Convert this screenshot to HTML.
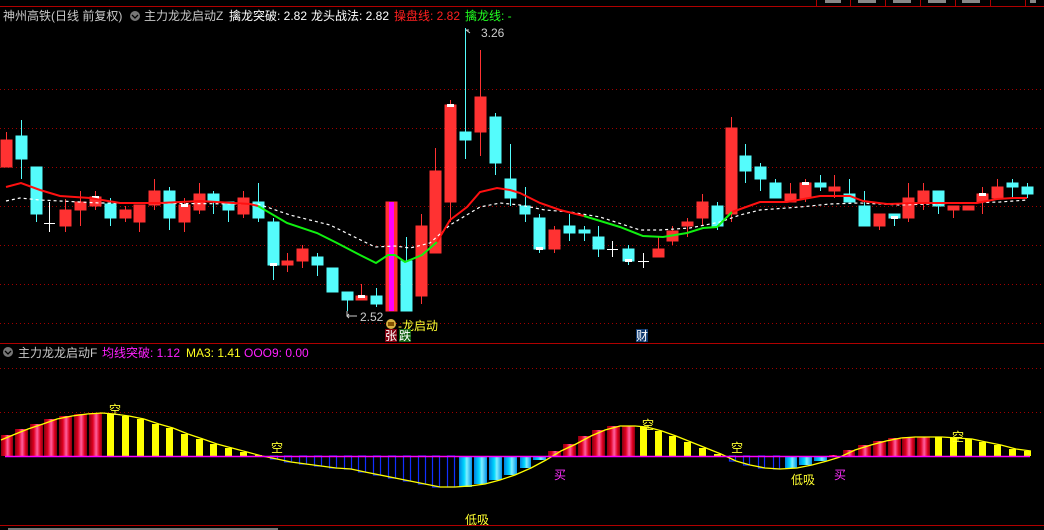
<!DOCTYPE html>
<html><head><meta charset="utf-8"><style>
html,body{margin:0;padding:0;background:#000;width:1044px;height:530px;overflow:hidden}
svg{display:block}
text{font-family:"Liberation Sans","Noto Sans CJK SC",sans-serif;font-size:12px}
</style></head><body>
<svg width="1044" height="530" viewBox="0 0 1044 530" xmlns="http://www.w3.org/2000/svg">
<defs>
<linearGradient id="rg" x1="0" x2="1" y1="0" y2="0">
<stop offset="0" stop-color="#8a0010"/><stop offset="0.3" stop-color="#e00020"/><stop offset="0.55" stop-color="#ff60a0"/><stop offset="0.8" stop-color="#e00020"/><stop offset="1" stop-color="#8a0010"/></linearGradient>
<linearGradient id="cg" x1="0" x2="1" y1="0" y2="0">
<stop offset="0" stop-color="#0080e0"/><stop offset="0.4" stop-color="#00d8ff"/><stop offset="0.6" stop-color="#80f0ff"/><stop offset="1" stop-color="#0090e8"/></linearGradient>
</defs>
<rect width="1044" height="530" fill="#000"/>
<!-- top toolbar -->
<line x1="0" y1="6.5" x2="1044" y2="6.5" stroke="#b00000"/>
<g stroke="#b00000"><line x1="816.5" y1="0" x2="816.5" y2="6"/><line x1="850.5" y1="0" x2="850.5" y2="6"/><line x1="885.5" y1="0" x2="885.5" y2="6"/><line x1="920.5" y1="0" x2="920.5" y2="6"/><line x1="955.5" y1="0" x2="955.5" y2="6"/><line x1="990.5" y1="0" x2="990.5" y2="6"/><line x1="1025.5" y1="0" x2="1025.5" y2="6"/></g>
<g fill="#888"><rect x="825" y="0" width="16" height="3"/><rect x="858" y="0" width="18" height="3"/><rect x="893" y="0" width="18" height="3"/><rect x="928" y="0" width="18" height="3"/><rect x="962" y="0" width="18" height="3"/><rect x="1030" y="0" width="6" height="3"/></g>
<!-- header -->
<text x="3" y="20" fill="#c8c8c8">神州高铁(日线 前复权)</text>
<circle cx="135" cy="16" r="5" fill="#777"/><path d="M132 15l3 3 3-3" stroke="#000" stroke-width="1.3" fill="none"/>
<text x="144" y="20" fill="#c8c8c8">主力龙龙启动Z</text>
<text x="229" y="20" fill="#fff">擒龙突破: 2.82</text>
<text x="311" y="20" fill="#fff">龙头战法: 2.82</text>
<text x="394" y="20" fill="#ff2020">操盘线: 2.82</text>
<text x="465" y="20" fill="#20ff20">擒龙线: -</text>
<!-- grid -->
<g stroke="#a00000" stroke-dasharray="1 3">
<line x1="0" y1="89.5" x2="1044" y2="89.5"/><line x1="0" y1="128.5" x2="1044" y2="128.5"/><line x1="0" y1="167.5" x2="1044" y2="167.5"/><line x1="0" y1="206.5" x2="1044" y2="206.5"/><line x1="0" y1="245.5" x2="1044" y2="245.5"/><line x1="0" y1="284.5" x2="1044" y2="284.5"/><line x1="0" y1="323.5" x2="1044" y2="323.5"/>
<line x1="0" y1="368.5" x2="1044" y2="368.5"/><line x1="0" y1="412.5" x2="1044" y2="412.5"/>
</g>
<!-- candles -->
<g stroke-width="1">
<g stroke="#ff3232" fill="#ff3232">
<line x1="6.5" y1="132" x2="6.5" y2="167"/><rect x="1" y="140" width="11" height="27"/>
<line x1="65.5" y1="199" x2="65.5" y2="232"/><rect x="60" y="210" width="11" height="16"/>
<line x1="80.5" y1="191" x2="80.5" y2="226"/><rect x="75" y="202" width="11" height="8"/>
<line x1="95.5" y1="191" x2="95.5" y2="210"/><rect x="90" y="197" width="11" height="9"/>
<line x1="125.5" y1="206" x2="125.5" y2="222"/><rect x="120" y="210" width="11" height="8"/>
<line x1="139.5" y1="205" x2="139.5" y2="232"/><rect x="134" y="205" width="11" height="17"/>
<line x1="154.5" y1="179" x2="154.5" y2="210"/><rect x="149" y="191" width="11" height="14"/>
<line x1="184.5" y1="198" x2="184.5" y2="232"/><rect x="179" y="205" width="11" height="17"/>
<line x1="199.5" y1="183" x2="199.5" y2="214"/><rect x="194" y="194" width="11" height="16"/>
<line x1="243.5" y1="191" x2="243.5" y2="218"/><rect x="238" y="198" width="11" height="16"/>
<line x1="287.5" y1="253" x2="287.5" y2="272"/><rect x="282" y="261" width="11" height="4"/>
<line x1="302.5" y1="245" x2="302.5" y2="268"/><rect x="297" y="249" width="11" height="12"/>
<line x1="361.5" y1="284" x2="361.5" y2="300"/><rect x="356" y="296" width="11" height="4"/>
<rect x="386" y="202" width="11" height="109"/>
<line x1="421.5" y1="214" x2="421.5" y2="304"/><rect x="416" y="226" width="11" height="70"/>
<line x1="435.5" y1="148" x2="435.5" y2="253"/><rect x="430" y="171" width="11" height="82"/>
<line x1="450.5" y1="100" x2="450.5" y2="222"/><rect x="445" y="105" width="11" height="97"/>
<line x1="480.5" y1="50" x2="480.5" y2="156"/><rect x="475" y="97" width="11" height="35"/>
<line x1="554.5" y1="226" x2="554.5" y2="253"/><rect x="549" y="230" width="11" height="19"/>
<line x1="658.5" y1="237" x2="658.5" y2="257"/><rect x="653" y="249" width="11" height="8"/>
<line x1="672.5" y1="226" x2="672.5" y2="245"/><rect x="667" y="231" width="11" height="10"/>
<line x1="687.5" y1="218" x2="687.5" y2="237"/><rect x="682" y="222" width="11" height="4"/>
<line x1="702.5" y1="194" x2="702.5" y2="226"/><rect x="697" y="202" width="11" height="16"/>
<line x1="731.5" y1="117" x2="731.5" y2="222"/><rect x="726" y="128" width="11" height="86"/>
<line x1="790.5" y1="183" x2="790.5" y2="202"/><rect x="785" y="194" width="11" height="8"/>
<line x1="805.5" y1="179" x2="805.5" y2="202"/><rect x="800" y="183" width="11" height="15"/>
<line x1="834.5" y1="175" x2="834.5" y2="198"/><rect x="829" y="187" width="11" height="4"/>
<line x1="879.5" y1="214" x2="879.5" y2="230"/><rect x="874" y="214" width="11" height="12"/>
<line x1="908.5" y1="183" x2="908.5" y2="222"/><rect x="903" y="198" width="11" height="20"/>
<line x1="923.5" y1="183" x2="923.5" y2="210"/><rect x="918" y="191" width="11" height="11"/>
<line x1="953.5" y1="206" x2="953.5" y2="218"/><rect x="948" y="206" width="11" height="4"/>
<rect x="963" y="206" width="11" height="4"/>
<line x1="982.5" y1="187" x2="982.5" y2="214"/><rect x="977" y="194" width="11" height="8"/>
<line x1="997.5" y1="179" x2="997.5" y2="198"/><rect x="992" y="187" width="11" height="11"/>
</g>
<rect x="389" y="202" width="5" height="109" fill="#ff00ff"/>
<g stroke="#54fcfc" fill="#54fcfc">
<line x1="21.5" y1="120" x2="21.5" y2="179"/><rect x="16" y="136" width="11" height="23"/>
<line x1="36.5" y1="167" x2="36.5" y2="222"/><rect x="31" y="167" width="11" height="47"/>
<line x1="110.5" y1="198" x2="110.5" y2="226"/><rect x="105" y="204" width="11" height="14"/>
<line x1="169.5" y1="187" x2="169.5" y2="230"/><rect x="164" y="191" width="11" height="27"/>
<line x1="213.5" y1="191" x2="213.5" y2="214"/><rect x="208" y="194" width="11" height="8"/>
<line x1="228.5" y1="202" x2="228.5" y2="222"/><rect x="223" y="202" width="11" height="8"/>
<line x1="258.5" y1="183" x2="258.5" y2="222"/><rect x="253" y="202" width="11" height="16"/>
<line x1="273.5" y1="218" x2="273.5" y2="280"/><rect x="268" y="222" width="11" height="43"/>
<line x1="317.5" y1="253" x2="317.5" y2="276"/><rect x="312" y="257" width="11" height="8"/>
<rect x="327" y="268" width="11" height="24"/>
<line x1="347.5" y1="292" x2="347.5" y2="311"/><rect x="342" y="292" width="11" height="8"/>
<line x1="376.5" y1="288" x2="376.5" y2="307"/><rect x="371" y="296" width="11" height="8"/>
<line x1="406.5" y1="237" x2="406.5" y2="311"/><rect x="401" y="261" width="11" height="50"/>
<line x1="465.5" y1="28" x2="465.5" y2="159"/><rect x="460" y="132" width="11" height="8"/>
<line x1="495.5" y1="113" x2="495.5" y2="175"/><rect x="490" y="117" width="11" height="46"/>
<line x1="510.5" y1="144" x2="510.5" y2="206"/><rect x="505" y="179" width="11" height="19"/>
<line x1="525.5" y1="187" x2="525.5" y2="222"/><rect x="520" y="206" width="10" height="8"/>
<line x1="539.5" y1="214" x2="539.5" y2="253"/><rect x="534" y="218" width="11" height="31"/>
<line x1="569.5" y1="214" x2="569.5" y2="241"/><rect x="564" y="226" width="11" height="7"/>
<line x1="584.5" y1="226" x2="584.5" y2="241"/><rect x="579" y="230" width="11" height="3"/>
<line x1="598.5" y1="226" x2="598.5" y2="257"/><rect x="593" y="237" width="11" height="12"/>
<line x1="628.5" y1="245" x2="628.5" y2="265"/><rect x="623" y="249" width="11" height="12"/>
<line x1="717.5" y1="202" x2="717.5" y2="230"/><rect x="712" y="206" width="11" height="20"/>
<line x1="745.5" y1="144" x2="745.5" y2="183"/><rect x="740" y="156" width="11" height="15"/>
<line x1="760.5" y1="163" x2="760.5" y2="191"/><rect x="755" y="167" width="11" height="12"/>
<line x1="775.5" y1="179" x2="775.5" y2="198"/><rect x="770" y="183" width="11" height="15"/>
<line x1="820.5" y1="175" x2="820.5" y2="191"/><rect x="815" y="183" width="11" height="4"/>
<line x1="849.5" y1="179" x2="849.5" y2="202"/><rect x="844" y="194" width="11" height="8"/>
<line x1="864.5" y1="191" x2="864.5" y2="226"/><rect x="859" y="206" width="11" height="20"/>
<line x1="894.5" y1="214" x2="894.5" y2="226"/><rect x="889" y="214" width="11" height="4"/>
<line x1="938.5" y1="191" x2="938.5" y2="214"/><rect x="933" y="191" width="11" height="15"/>
<line x1="1012.5" y1="179" x2="1012.5" y2="198"/><rect x="1007" y="183" width="11" height="4"/>
<line x1="1027.5" y1="183" x2="1027.5" y2="198"/><rect x="1022" y="187" width="11" height="7"/>
</g>
<g stroke="#fff">
<line x1="44" y1="223.5" x2="55" y2="223.5"/><line x1="49.5" y1="202" x2="49.5" y2="232"/>
<line x1="607" y1="249.5" x2="618" y2="249.5"/><line x1="612.5" y1="241" x2="612.5" y2="257"/>
<line x1="638" y1="261.5" x2="649" y2="261.5"/><line x1="643.5" y1="253" x2="643.5" y2="268"/>
</g>
<g fill="#fff">
<rect x="92" y="196" width="7" height="3"/><rect x="181" y="204" width="7" height="3"/><rect x="270" y="263" width="7" height="3"/><rect x="358" y="295" width="7" height="3"/><rect x="447" y="104" width="7" height="3"/><rect x="536" y="247" width="7" height="3"/><rect x="625" y="259" width="7" height="3"/><rect x="802" y="182" width="7" height="3"/><rect x="891" y="216" width="7" height="3"/><rect x="979" y="193" width="7" height="3"/>
</g>
</g>
<!-- MA lines -->
<polyline fill="none" stroke="#fff" stroke-width="1.2" stroke-dasharray="3 3" points="6,201 20,198 40,200 100,203 258,204 290,215 330,225 375,247 395,246 410,248 430,243 450,225 480,207 500,203 520,205 545,210 570,212 600,217 640,230 660,230 690,228 720,222 740,215 760,210 800,207 830,204 860,203 900,205 960,203 1000,202 1027,200"/>
<polyline fill="none" stroke="#ff1010" stroke-width="2" points="6,187 21,183 40,190 60,196 90,198 120,203 160,203 200,201 250,204 258,206"/>
<polyline fill="none" stroke="#10f010" stroke-width="2" points="258,206 287,223 317,233 337,243 360,255 376,263 388,255 395,255 405,262 422,255 437,242"/>
<polyline fill="none" stroke="#ff1010" stroke-width="2" points="437,242 450,220 467,207 480,192 497,188 510,190 520,193 540,203 560,210 584,216"/>
<polyline fill="none" stroke="#10f010" stroke-width="2" points="584,216 620,227 643,236 663,237 687,233 703,228 717,227 732,212"/>
<polyline fill="none" stroke="#ff1010" stroke-width="2" points="732,212 760,202 787,202 820,196 850,196 863,201 887,204 920,203 977,203 997,199 1013,198 1027,198"/>
<!-- annotations -->
<path d="M466 30h3M466 30l4 3" stroke="#ccc" fill="none"/>
<text x="481" y="37" fill="#ccc" font-size="11">3.26</text>
<path d="M347 311v5h10M349 314l-2 2 2 2" stroke="#ccc" fill="none"/>
<text x="360" y="321" fill="#ccc" font-size="11">2.52</text>
<circle cx="391" cy="324" r="5" fill="#d8b040"/><rect x="388" y="322" width="6" height="4" fill="#805000"/>
<text x="398" y="330" fill="#ffff30">-龙启动</text>
<rect x="385" y="329" width="12" height="13" fill="#800010"/><text x="385" y="340" fill="#fff" font-size="11">张</text>
<rect x="399" y="329" width="12" height="13" fill="#106010"/><text x="399" y="340" fill="#fff" font-size="11">跌</text>
<rect x="636" y="329" width="12" height="13" fill="#103a70"/><text x="636" y="340" fill="#fff" font-size="11">财</text>
<!-- separator -->
<line x1="0" y1="343.5" x2="1044" y2="343.5" stroke="#b00000"/>
<circle cx="8" cy="352" r="5" fill="#777"/><path d="M5 351l3 3 3-3" stroke="#000" stroke-width="1.3" fill="none"/>
<text x="18" y="357" fill="#c8c8c8">主力龙龙启动F</text>
<text x="102" y="357" fill="#ff20ff">均线突破: 1.12</text>
<text x="186" y="357" fill="#ffff20">MA3: 1.41</text>
<text x="244" y="357" fill="#ff20ff">OOO9: 0.00</text>
<!-- lower bars -->
<g fill="url(#rg)">
<rect x="1" y="435" width="12" height="21"/><rect x="15" y="429" width="13" height="27"/><rect x="30" y="424" width="13" height="32"/><rect x="44" y="419" width="13" height="37"/><rect x="59" y="416" width="13" height="40"/><rect x="74" y="414" width="13" height="42"/><rect x="89" y="413" width="13" height="43"/>
<rect x="548" y="451" width="13" height="5"/><rect x="563" y="444" width="13" height="12"/><rect x="578" y="436" width="13" height="20"/><rect x="592" y="430" width="13" height="26"/><rect x="607" y="426" width="13" height="30"/><rect x="622" y="426" width="13" height="30"/>
<rect x="829" y="455" width="8" height="1"/><rect x="843" y="450" width="12" height="6"/><rect x="858" y="445" width="13" height="11"/><rect x="873" y="441" width="13" height="15"/><rect x="888" y="438" width="13" height="18"/><rect x="902" y="437" width="13" height="19"/><rect x="917" y="437" width="13" height="19"/>
</g>
<g fill="#ffff00">
<rect x="107" y="414" width="7" height="42"/><rect x="122" y="416" width="7" height="40"/><rect x="137" y="419" width="7" height="37"/><rect x="152" y="424" width="7" height="32"/><rect x="166" y="428" width="7" height="28"/><rect x="181" y="434" width="7" height="22"/><rect x="196" y="439" width="7" height="17"/><rect x="210" y="444" width="7" height="12"/><rect x="225" y="448" width="7" height="8"/><rect x="240" y="452" width="7" height="4"/><rect x="255" y="455" width="7" height="1"/>
<rect x="640" y="427" width="7" height="29"/><rect x="655" y="431" width="7" height="25"/><rect x="669" y="436" width="7" height="20"/><rect x="684" y="442" width="7" height="14"/><rect x="699" y="448" width="7" height="8"/><rect x="714" y="454" width="7" height="2"/>
<rect x="935" y="437" width="7" height="19"/><rect x="950" y="438" width="7" height="18"/><rect x="965" y="439" width="7" height="17"/><rect x="979" y="442" width="7" height="14"/><rect x="994" y="445" width="7" height="11"/><rect x="1009" y="449" width="7" height="7"/><rect x="1024" y="451" width="7" height="5"/>
</g>
<g fill="none" stroke="#1030ff" stroke-width="1.2">
<rect x="270.5" y="456" width="7" height="3"/><rect x="284.5" y="456" width="7" height="6"/><rect x="299.5" y="456" width="7" height="8"/><rect x="314.5" y="456" width="7" height="10"/><rect x="329.5" y="456" width="7" height="12"/><rect x="344.5" y="456" width="7" height="13"/><rect x="358.5" y="456" width="7" height="16"/><rect x="373.5" y="456" width="7" height="19"/><rect x="388.5" y="456" width="7" height="22"/><rect x="403.5" y="456" width="7" height="25"/><rect x="418.5" y="456" width="7" height="28"/><rect x="432.5" y="456" width="7" height="31"/><rect x="447.5" y="456" width="7" height="31"/>
<rect x="729.5" y="456" width="6" height="5"/><rect x="743.5" y="456" width="6" height="9"/><rect x="758.5" y="456" width="6" height="12"/><rect x="773.5" y="456" width="6" height="13"/>
</g>
<g fill="url(#cg)">
<rect x="459" y="456" width="13" height="31"/><rect x="474" y="456" width="13" height="28"/><rect x="489" y="456" width="13" height="24"/><rect x="504" y="456" width="13" height="19"/><rect x="520" y="456" width="11" height="12"/><rect x="533" y="456" width="13" height="4"/>
<rect x="785" y="456" width="12" height="12"/><rect x="799" y="456" width="13" height="9"/><rect x="814" y="456" width="13" height="5"/>
</g>
<polyline fill="none" stroke="#ffff00" stroke-width="1.3" points="1,440 13,435 28,429 43,424 57,419 72,416 87,414 102,413 114,414 129,416 144,419 159,424 173,428 188,434 203,439 217,444 232,448 247,452 262,456 277,459 291,462 306,464 321,466 336,468 351,469 365,472 380,475 395,478 410,481 425,484 440,487 455,487 470,486 485,484 500,480 515,475 531,468 546,460 561,451 576,444 591,436 605,430 620,426 635,426 647,427 662,431 676,436 691,442 706,448 721,454 736,461 750,465 765,468 780,469 797,468 812,465 827,461 840,457 855,450 871,445 886,441 901,438 915,437 930,437 942,437 957,438 972,439 986,442 1001,445 1016,449 1031,451"/>
<line x1="5" y1="456.5" x2="1030" y2="456.5" stroke="#ff00ff" stroke-width="1.5"/>
<g fill="#ffff30" font-size="12">
<text x="109" y="414">空</text><text x="271" y="452">空</text><text x="642" y="429">空</text><text x="731" y="452">空</text><text x="952" y="441">空</text>
<text x="791" y="484">低吸</text><text x="465" y="524">低吸</text>
</g>
<g fill="#ff30ff"><text x="554" y="479">买</text><text x="834" y="479">买</text></g>
<line x1="0" y1="525.5" x2="1044" y2="525.5" stroke="#b00000"/>
<g fill="#777"><rect x="8" y="528" width="270" height="2"/></g>
</svg>
</body></html>
